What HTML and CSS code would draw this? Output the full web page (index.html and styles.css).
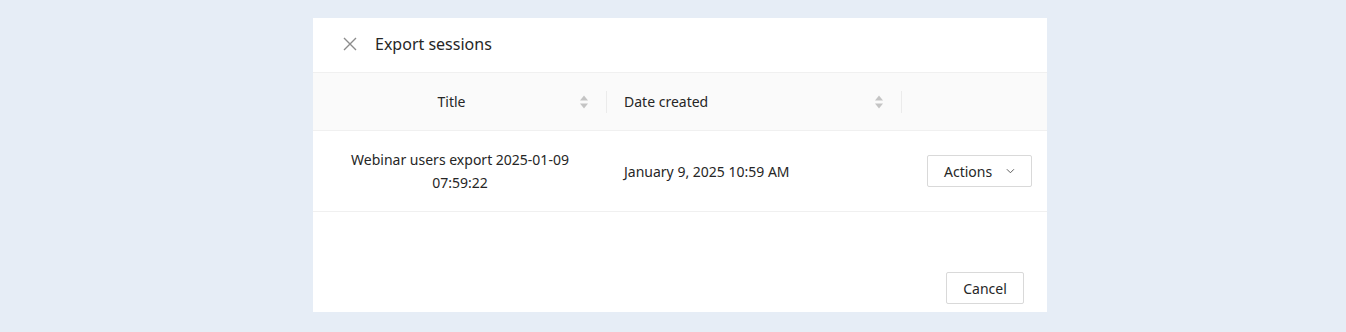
FILE: index.html
```html
<!DOCTYPE html>
<html lang="en">
<head>
    <meta charset="UTF-8">
    <meta name="viewport" content="width=device-width, initial-scale=1.0">
    <title>Export sessions</title>
    <link rel="stylesheet" href="styles.css">
</head>
<body>
    <div class="modal">
        <div class="modal-header">
            <button class="close-button" aria-label="Close">
                <svg width="14" height="14" viewBox="0 0 14 14">
                    <path d="M1 1L13 13M13 1L1 13" stroke="#8c8c8c" stroke-width="1.4" fill="none"/>
                </svg>
            </button>
            <span class="modal-title">Export sessions</span>
        </div>

        <table class="sessions">
            <thead>
                <tr>
                    <th class="col-title">
                        <div class="th-inner center">
                            <span>Title</span>
                            <span class="sorter">
                                <svg width="10" height="16" viewBox="0 0 10 16">
                                    <path d="M5 1.5L9 6.5H1Z" fill="#c4c4c4"/>
                                    <path d="M5 14.5L9 9.5H1Z" fill="#c4c4c4"/>
                                </svg>
                            </span>
                        </div>
                    </th>
                    <th class="col-date">
                        <div class="th-inner">
                            <span>Date created</span>
                            <span class="sorter">
                                <svg width="10" height="16" viewBox="0 0 10 16">
                                    <path d="M5 1.5L9 6.5H1Z" fill="#c4c4c4"/>
                                    <path d="M5 14.5L9 9.5H1Z" fill="#c4c4c4"/>
                                </svg>
                            </span>
                        </div>
                    </th>
                    <th class="col-actions"></th>
                </tr>
            </thead>
            <tbody>
                <tr>
                    <td class="cell-title">Webinar users export 2025-01-09<br>07:59:22</td>
                    <td class="cell-date">January 9, 2025 10:59 AM</td>
                    <td class="cell-actions">
                        <button class="btn actions-button">
                            Actions
                            <svg width="10" height="10" viewBox="0 0 10 10">
                                <path d="M1 3L5 7L9 3" stroke="#595959" stroke-width="1.1" fill="none"/>
                            </svg>
                        </button>
                    </td>
                </tr>
            </tbody>
        </table>

        <div class="modal-footer">
            <button class="btn">Cancel</button>
        </div>
    </div>
</body>
</html>
```

FILE: styles.css
```css
* {
    box-sizing: border-box;
    margin: 0;
    padding: 0;
    font-family: "Noto Sans", "Open Sans", sans-serif;
}

body {
    background-color: #e6edf6;
    min-height: 100vh;
    padding: 18px 0 0 313px;
}

.modal {
    background-color: white;
    width: 734px;
    height: 294px;
    display: flex;
    flex-direction: column;
}

.modal-header {
    height: 55px;
    display: flex;
    align-items: center;
    gap: 17px;
    padding: 0 0 2px 29px;
    border-bottom: 1px solid #f0f0f0;
}

.close-button {
    background: none;
    border: none;
    width: 16px;
    height: 16px;
    display: flex;
    align-items: center;
    justify-content: center;
    cursor: pointer;
}

.modal-title {
    font-size: 16px;
    color: #262626;
}

.sessions {
    width: 100%;
    border-collapse: collapse;
    table-layout: fixed;
    font-size: 14px;
    color: #262626;
}

.col-title {
    width: 294px;
}

.col-date {
    width: 295px;
}

thead th {
    background-color: #fafafa;
    height: 57px;
    font-weight: 400;
    border-bottom: 1px solid #f0f0f0;
    padding: 0;
}

.th-inner {
    display: flex;
    align-items: center;
    height: 57px;
    padding: 0 18px 0 17px;
    position: relative;
}

.th-inner::after {
    content: "";
    position: absolute;
    right: 0;
    top: 18px;
    height: 22px;
    width: 1px;
    background-color: #ebebeb;
}

.th-inner span:first-child {
    flex: 1;
    text-align: left;
}

.th-inner.center span:first-child {
    text-align: center;
    margin-right: 6px;
}

.sorter {
    display: flex;
    align-items: center;
}

tbody td {
    height: 81px;
    border-bottom: 1px solid #f0f0f0;
    line-height: 23px;
}

.cell-title {
    text-align: center;
    padding: 0 16px;
}

.cell-date {
    padding-left: 17px;
}

.cell-actions {
    text-align: right;
    padding-right: 15px;
}

.btn {
    background: white;
    border: 1px solid #d9d9d9;
    border-radius: 2px;
    height: 32px;
    padding: 0 16px;
    font-size: 14px;
    color: #262626;
    cursor: pointer;
}

.actions-button {
    display: inline-flex;
    align-items: center;
    gap: 14px;
    width: 105px;
}

.modal-footer {
    margin-top: auto;
    display: flex;
    justify-content: flex-end;
    padding: 0 23px 8px 0;
}

.modal-footer .btn {
    width: 78px;
}
```
